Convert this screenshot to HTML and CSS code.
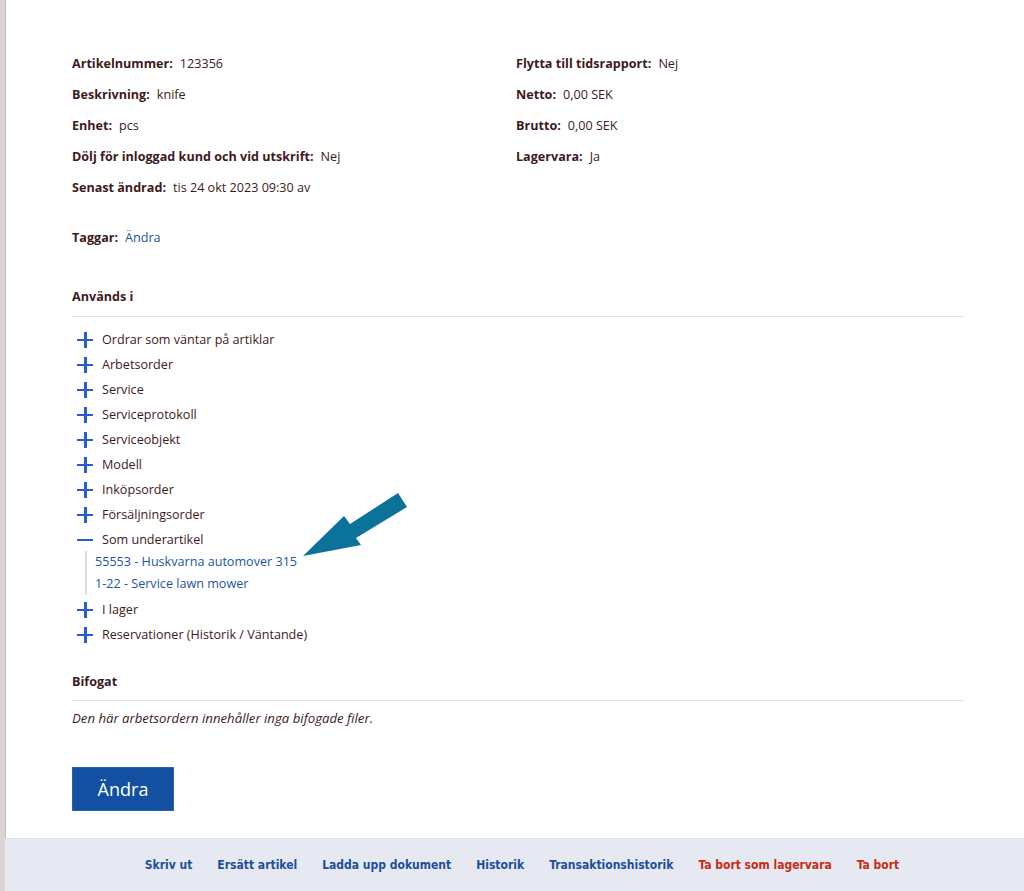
FILE: index.html
```html
<!DOCTYPE html>
<html lang="sv">
<head>
<meta charset="utf-8">
<title>Artikel</title>
<link rel="stylesheet" href="styles.css">
</head>
<body>
<div class="page">
  <main class="main">
    <section class="fields">
      <div class="col">
        <div class="row"><span class="lbl">Artikelnummer:</span><span class="val">123356</span></div>
        <div class="row"><span class="lbl">Beskrivning:</span><span class="val">knife</span></div>
        <div class="row"><span class="lbl">Enhet:</span><span class="val">pcs</span></div>
        <div class="row"><span class="lbl">Dölj för inloggad kund och vid utskrift:</span><span class="val">Nej</span></div>
        <div class="row"><span class="lbl">Senast ändrad:</span><span class="val">tis 24 okt 2023 09:30 av</span></div>
      </div>
      <div class="col">
        <div class="row"><span class="lbl">Flytta till tidsrapport:</span><span class="val">Nej</span></div>
        <div class="row"><span class="lbl">Netto:</span><span class="val">0,00 SEK</span></div>
        <div class="row"><span class="lbl">Brutto:</span><span class="val">0,00 SEK</span></div>
        <div class="row"><span class="lbl">Lagervara:</span><span class="val">Ja</span></div>
      </div>
    </section>

    <div class="row tags"><span class="lbl">Taggar:</span><a class="link" href="#">Ändra</a></div>

    <h3 class="heading used">Används i</h3>
    <ul class="tree">
      <li class="node"><span class="ico plus"></span>Ordrar som väntar på artiklar</li>
      <li class="node"><span class="ico plus"></span>Arbetsorder</li>
      <li class="node"><span class="ico plus"></span>Service</li>
      <li class="node"><span class="ico plus"></span>Serviceprotokoll</li>
      <li class="node"><span class="ico plus"></span>Serviceobjekt</li>
      <li class="node"><span class="ico plus"></span>Modell</li>
      <li class="node"><span class="ico plus"></span>Inköpsorder</li>
      <li class="node"><span class="ico plus"></span>Försäljningsorder</li>
      <li class="node"><span class="ico minus"></span>Som underartikel</li>
      <li class="sub">
        <a class="link subitem" href="#">55553 - Huskvarna automover 315</a>
        <a class="link subitem" href="#">1-22 - Service lawn mower</a>
      </li>
      <li class="node"><span class="ico plus"></span>I lager</li>
      <li class="node"><span class="ico plus"></span>Reservationer (Historik / Väntande)</li>
    </ul>

    <h3 class="heading attach">Bifogat</h3>
    <p class="empty">Den här arbetsordern innehåller inga bifogade filer.</p>

    <button class="btn" type="button">Ändra</button>

    <svg class="arrow" width="120" height="80" viewBox="300 485 120 80" aria-hidden="true">
      <polygon points="305,553 346,513 352,521 400,490 409,504 358,535 363,542" fill="#0b7399"/>
    </svg>
  </main>
  <footer class="footer">
    <a class="flink" href="#">Skriv ut</a>
    <a class="flink" href="#">Ersätt artikel</a>
    <a class="flink" href="#">Ladda upp dokument</a>
    <a class="flink" href="#">Historik</a>
    <a class="flink" href="#">Transaktionshistorik</a>
    <a class="flink red" href="#">Ta bort som lagervara</a>
    <a class="flink red" href="#">Ta bort</a>
  </footer>
</div>
</body>
</html>
```

FILE: styles.css
```css
* { box-sizing: border-box; }
html, body { margin: 0; padding: 0; background: #fff; }
body {
  font-family: "Open Sans", "Liberation Sans", sans-serif;
  font-size: 12.6px;
  color: #3d1a1c;
}
.page {
  min-height: 891px;
  display: flex;
  flex-direction: column;
  border-left: 5px solid #ddd3d3;
  box-shadow: inset 1px 0 0 #c9bcbc;
}
.main {
  position: relative;
  flex: 1;
  padding: 48px 59px 26px 67px;
}
.fields {
  display: grid;
  grid-template-columns: 444px 1fr;
}
.row {
  line-height: 31px;
  height: 31px;
  white-space: nowrap;
}
.lbl { font-weight: 700; margin-right: 7px; }
.link { color: #1b55a6; text-decoration: none; }
.tags { margin-top: 19px; }
.heading {
  margin: 0;
  font-size: 12.6px;
  font-weight: 700;
  line-height: 20px;
  padding-bottom: 9px;
  border-bottom: 1px solid #e4e4e4;
}
.used { margin-top: 34px; }
.tree {
  list-style: none;
  margin: 10px 0 0;
  padding: 0;
}
.node {
  display: flex;
  align-items: center;
  height: 25px;
  line-height: 25px;
}
.ico {
  position: relative;
  width: 16px;
  height: 16px;
  margin: 0 9px 0 5px;
  flex: none;
}
.ico::before, .plus::after {
  content: "";
  position: absolute;
  background: #2a5bd1;
}
.ico::before { left: 0; right: 0; top: 7px; height: 2.5px; }
.plus::after { top: 0; bottom: 0; left: 7px; width: 2.5px; }
.sub {
  display: flex;
  flex-direction: column;
  margin: -1px 0 2px 13px;
  padding-left: 8px;
  border-left: 2px solid #dcdcdc;
}
.subitem {
  line-height: 22px;
  height: 22px;
}
.attach { margin-top: 25px; }
.heading.attach { padding-bottom: 8px; }
.empty {
  margin: 7px 0 0;
  font-style: italic;
  font-size: 13.2px;
  line-height: 20px;
}
.btn {
  display: block;
  margin-top: 39px;
  width: 102px;
  height: 44px;
  border: 1px solid #2763b5;
  background: #1450a2;
  color: #fff;
  font-family: "Open Sans", "Liberation Sans", sans-serif;
  font-size: 18px;
  padding: 0;
  cursor: pointer;
}
.arrow {
  position: absolute;
  left: 293px;
  top: 488px;
}
.footer {
  height: 53px;
  background: #e6e9f2;
  border-top: 1px solid #e0e3ec;
  display: flex;
  justify-content: center;
  align-items: center;
  gap: 25px;
  padding-left: 15px;
}
.flink {
  font-family: "DejaVu Sans Condensed", "DejaVu Sans", sans-serif;
  font-stretch: condensed;
  font-weight: 700;
  font-size: 12px;
  color: #1d4f9c;
  text-decoration: none;
}
.red { color: #cc2a12; }
```
